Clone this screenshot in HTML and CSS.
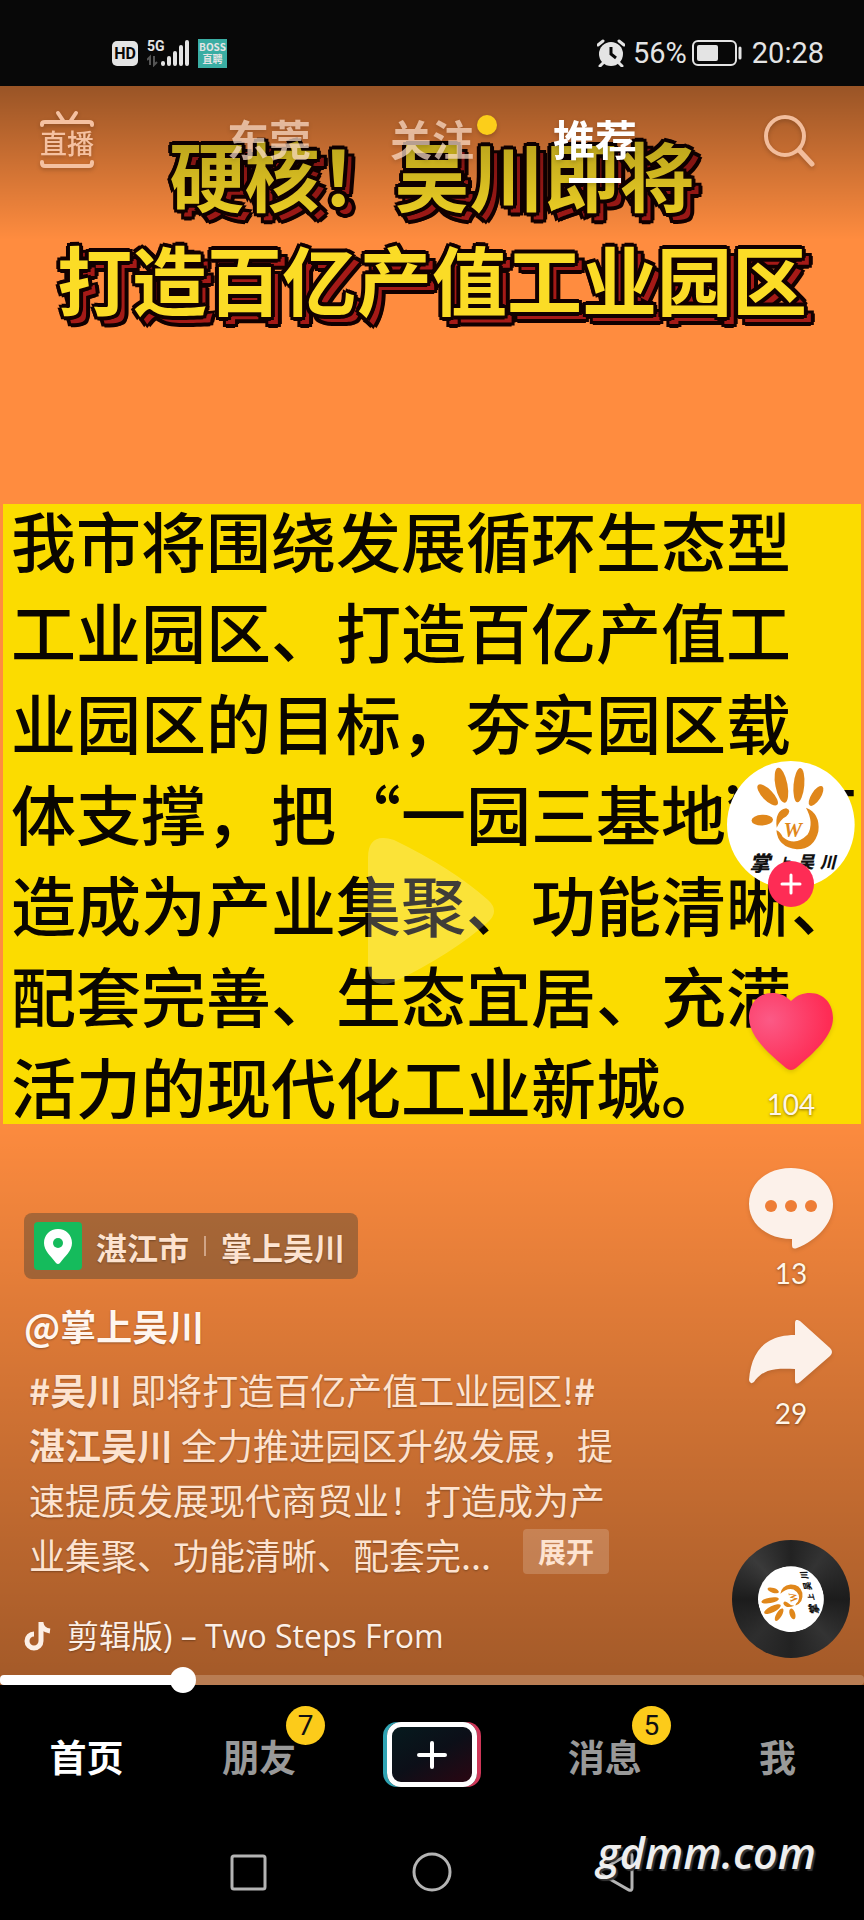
FILE: index.html
```html
<!DOCTYPE html>
<html lang="zh-CN">
<head>
  <meta charset="UTF-8" />
  <meta name="viewport" content="width=device-width, initial-scale=1.0" />
  <title>推荐 - 掌上吴川</title>
  <link rel="stylesheet" href="styles.css">
</head>
<body>
  <!-- shared logo -->
  <svg class="defs" width="0" height="0" aria-hidden="true">
    <symbol id="logo" viewBox="142 66 381 381">
      <circle cx="332" cy="256" r="190" fill="#fff"/>
      <g fill="#e0871b">
        <ellipse cx="247" cy="242" rx="32" ry="16" transform="rotate(-3 247 242)"/>
        <ellipse cx="263" cy="167" rx="41" ry="16" transform="rotate(46 263 167)"/>
        <ellipse cx="304" cy="138" rx="18" ry="53" transform="rotate(-11 304 138)"/>
        <ellipse cx="356" cy="138" rx="16" ry="51" transform="rotate(5 356 138)"/>
        <ellipse cx="407" cy="170" rx="14" ry="34" transform="rotate(33 407 170)"/>
        <path d="M377 205Q420 222 414 275Q402 328 350 329Q293 322 289 272Q300 275 308 292Q345 322 382 285Q402 250 377 205Z"/>
        <path d="M290 265Q283 214 318 207Q337 213 318 231Q300 240 290 265Z"/>
      </g>
      <text x="310" y="292" class="logo-w">W</text>
      <g class="logo-name">
        <text x="208" y="394" font-size="62">掌</text>
        <text x="290" y="386" font-size="40">上</text>
        <text x="352" y="386" font-size="50">吴</text>
        <text x="418" y="384" font-size="48">川</text>
      </g>
    </symbol>
  </svg>

  <!-- STATUS BAR -->
  <div class="status">
    <div class="status-left">
      <span class="hd">HD</span>
      <svg class="signal" width="43" height="28" viewBox="0 0 43 28">
        <text x="0" y="12" class="signal-text">5G</text>
        <path d="M3 26V18L0 21M7 17v9l3-3" stroke="#555" stroke-width="2" fill="none"/>
        <g stroke="#e4e4e4" stroke-width="4" stroke-linecap="round">
          <path d="M16 24v1M22 19v6M28 14v11M34 8v17M40 3v22"/>
        </g>
      </svg>
      <span class="boss"><b>BOSS</b><b>直聘</b></span>
    </div>
    <div class="status-right">
      <svg width="28" height="28" viewBox="0 0 28 28">
        <circle cx="14" cy="15" r="12" fill="#e4e4e4"/>
        <path d="M1 6l5-4M27 6l-5-4M6 24l-3 3M22 24l3 3" stroke="#e4e4e4" stroke-width="3" stroke-linecap="round"/>
        <path d="M14 8v7l5 4" stroke="#080808" stroke-width="3" fill="none"/>
      </svg>
      <span class="percent">56%</span>
      <svg class="battery" width="52" height="28" viewBox="0 0 52 28">
        <rect x="2" y="2" width="43" height="24" rx="5" fill="none" stroke="#e4e4e4" stroke-width="2"/>
        <rect x="6" y="6" width="21" height="16" rx="2" fill="#e4e4e4"/>
        <path d="M49 9v10" stroke="#e4e4e4" stroke-width="3" stroke-linecap="round"/>
      </svg>
      <span>20:28</span>
    </div>
  </div>

  <!-- VIDEO -->
  <main class="stage">
    <section class="video">
      <h1>硬核！吴川即将<br>打造百亿产值工业园区</h1>
      <div class="board">
        <p>我市将围绕发展循环生态型<br>工业园区、打造百亿产值工<br>业园区的目标，夯实园区载<br>体支撑，把“一园三基地”打<br>造成为产业集聚、功能清晰、<br>配套完善、生态宜居、充满<br>活力的现代化工业新城。</p>
        <svg class="play" width="126" height="146" viewBox="0 0 126 146">
          <path d="M0 20Q0 -6 26 2Q84 30 120 62Q132 73 120 84Q84 116 26 144Q0 152 0 126Z" fill="#fff"/>
        </svg>
      </div>
    </section>
    <div class="shade"></div>

    <header class="topbar">
      <a class="live" href="#live">
        <svg width="54" height="60" viewBox="0 0 54 60" fill="none" stroke="#f5c1a1" stroke-width="4" stroke-linecap="round" stroke-linejoin="round">
          <path d="M18 3l6 9M36 3l-6 9M2 15v-1q0-2 3-2h44q3 0 3 2v1M2 52v1q0 3 3 3h44q3 0 3-3v-1"/>
          <text x="0" y="44" class="live-text">直播</text>
        </svg>
      </a>
      <nav class="tabs">
        <a href="#city">东莞</a>
        <a href="#follow" class="dot">关注</a>
        <a href="#recommend" class="active">推荐</a>
      </nav>
      <button class="search" aria-label="搜索">
        <svg width="52" height="54" viewBox="0 0 52 54" fill="none" stroke="#f2bd9c" stroke-width="4" stroke-linecap="round">
          <circle cx="21" cy="22" r="19"/>
          <path d="M35 36l13 14" stroke-width="5"/>
        </svg>
      </button>
    </header>

    <!-- right side actions -->
    <aside class="rail">
      <div class="avatar">
        <svg width="128" height="128"><use href="#logo"/></svg>
        <button class="follow" aria-label="关注">
          <svg width="22" height="22" viewBox="0 0 22 22"><path d="M11 2v18M2 11h18" stroke="#fff" stroke-width="3" stroke-linecap="round"/></svg>
        </button>
      </div>
      <button class="action like">
        <svg width="86" height="78" viewBox="0 0 86 78">
          <defs>
            <radialGradient id="heart" cx=".25" cy=".35" r=".7">
              <stop offset="0" stop-color="#fb5a86"/>
              <stop offset="1" stop-color="#fe2c55"/>
            </radialGradient>
          </defs>
          <path d="M43 8C37 2 31 0 24 0C10 0 1 11 1 25C1 43 20 60 38 75Q43 79 48 75C66 60 85 43 85 25C85 11 76 0 62 0C55 0 49 2 43 8Z" fill="url(#heart)"/>
        </svg>
        <span>104</span>
      </button>
      <button class="action comment">
        <svg width="84" height="82" viewBox="0 0 84 82">
          <path d="M42 0C65 0 84 15 84 36C84 56 68 72 48 80Q43 82 43 77V71C18 71 0 56 0 36C0 15 18 0 42 0Z" fill="#fcf1ea"/>
          <g fill="#ee7d36"><circle cx="22" cy="38" r="6"/><circle cx="42" cy="38" r="6"/><circle cx="62" cy="38" r="6"/></g>
        </svg>
        <span>13</span>
      </button>
      <button class="action share">
        <svg width="84" height="64" viewBox="0 0 84 64">
          <path d="M46 3Q46 -2 51 1L81 28Q85 32 81 36L51 62Q46 66 46 60V49C26 48 14 49 5 62Q1 65 0 60C2 34 14 15 46 15Z" fill="#fcf1ea"/>
        </svg>
        <span>29</span>
      </button>
      <a class="disc" href="#music" aria-label="原声">
        <svg width="66" height="66"><use href="#logo"/></svg>
      </a>
    </aside>

    <!-- author + description -->
    <section class="info">
      <a class="place" href="#place">
        <svg width="48" height="48" viewBox="0 0 48 48">
          <rect width="48" height="48" rx="4" fill="#15bb5c"/>
          <path d="M24 7C16 7 10 13 10 21C10 29 17 34 22 41Q24 43 26 41C31 34 38 29 38 21C38 13 32 7 24 7Z" fill="#fff"/>
          <circle cx="24" cy="21" r="5" fill="#15bb5c"/>
        </svg>
        <span>湛江市</span>
        <i></i>
        <span>掌上吴川</span>
      </a>
      <h2>@掌上吴川</h2>
      <p class="desc"><b>#吴川</b> 即将打造百亿产值工业园区!<b>#<br>湛江吴川</b> 全力推进园区升级发展，提<br>速提质发展现代商贸业！打造成为产<br>业集聚、功能清晰、配套完... <button class="more">展开</button></p>
      <div class="music">
        <svg width="28" height="30" viewBox="0 0 28 30" fill="none" stroke="#fcefe6" stroke-width="5">
          <path d="M17 1v19a7 7 0 1 1-7-7M17 2q1 7 9 8"/>
        </svg>
        <span>剪辑版) – Two Steps From</span>
      </div>
    </section>

    <input class="progress" type="range" min="0" max="1000" value="203" aria-label="播放进度">
  </main>

  <!-- BOTTOM NAV -->
  <nav class="navbar">
    <a href="#home" class="active">首页</a>
    <a href="#friends"><span>朋友<em>7</em></span></a>
    <button class="add" aria-label="发布">
      <svg width="32" height="32" viewBox="0 0 32 32"><path d="M16 4v24M3 16h26" stroke="#fff" stroke-width="4" stroke-linecap="round"/></svg>
    </button>
    <a href="#inbox"><span>消息<em>5</em></span></a>
    <a href="#me">我</a>
  </nav>

  <footer class="system">
    <svg width="40" height="44" viewBox="0 0 40 44"><rect x="4" y="6" width="33" height="33" rx="2"/></svg>
    <svg width="44" height="44" viewBox="0 0 44 44"><circle cx="22" cy="22" r="18"/></svg>
    <svg width="40" height="44" viewBox="0 0 40 44"><path d="M5 20L33 4Q36 3 36 6V38Q36 41 33 40L5 24Q2 22 5 20Z"/></svg>
    <span class="watermark">gdmm.com</span>
  </footer>
</body>
</html>
```
FILE: styles.css
```css
*{box-sizing:border-box}
body{margin:0;min-height:100vh;display:flex;flex-direction:column;background:#000;font-family:"Noto Sans CJK SC",sans-serif;color:#fff}
a{color:inherit;text-decoration:none}
button{border:0;padding:0;background:none;font-family:inherit;color:inherit;cursor:pointer}
svg{display:block}
.defs{position:absolute}

/* logo */
.logo-w{font:italic bold 62px "Liberation Serif",serif;fill:#e0871b}
.logo-name{font-family:"Noto Sans CJK SC",sans-serif;font-weight:900;font-style:italic;fill:#111}

/* status bar */
.status{height:86px;padding:20px 40px 0 112px;display:flex;align-items:center;justify-content:space-between;background:#080808;color:#e4e4e4;font:29px/30px Roboto,sans-serif}
.status-left,.status-right{display:flex;align-items:center}
.hd{width:26px;height:25px;border-radius:5px;background:#e4e4e4;color:#080808;font-size:16px;font-weight:bold;line-height:26px;text-align:center}
.signal{margin:0 8px 0 9px}
.signal-text{font:bold 14px Roboto,sans-serif;fill:#e4e4e4}
.boss{width:29px;height:29px;background:#3aada3;display:flex;flex-direction:column;justify-content:center;text-align:center;font:10px/12px "Noto Sans CJK SC",sans-serif}
.percent{margin-left:8px}
.battery{margin:0 9px 0 4px}

/* video, every layer shares one cell */
.stage{flex:1;display:grid;grid-template-columns:minmax(0,1fr);background:#ff8c3f}
.stage>*{grid-area:1/1}
.video{padding:36px 3px 60px}
.video h1{margin:0;font-size:75px;font-weight:700;line-height:104px;text-align:center;white-space:nowrap;color:#fbdc26;
  text-shadow:4px 0 #100,-4px 0 #100,0 4px #100,0 -4px #100,3px 3px #100,-3px 3px #100,3px -3px #100,-3px -3px #100,
    7px 7px #a51a17,
    11px 7px #100,7px 11px #100,10px 10px #100,4px 10px #100,10px 4px #100}
.board{position:relative;margin-top:174px;padding-left:8px;display:flow-root;background:#fbdc00}
.board p{margin:-10px 0 -7px;font-size:65px;font-weight:500;line-height:91px;white-space:nowrap;color:#0a0600}
.play{position:absolute;left:365px;top:334px;opacity:.22}
.shade{background:linear-gradient(rgba(0,0,0,.4),transparent 154px),linear-gradient(transparent 1020px,rgba(0,0,0,.36) 100%)}

.topbar{align-self:start;padding:22px 40px 0;display:grid;grid-template-columns:1fr auto 1fr;align-items:start;filter:drop-shadow(0 2px 2px rgba(0,0,0,.2))}
.live{margin-top:2px}
.live-text{font-size:27px;font-weight:500;fill:#f5c1a1;stroke:none}
.tabs{display:flex;gap:79px;font-size:42px;font-weight:700;line-height:60px}
.tabs a{position:relative;color:rgba(255,225,205,.7)}
.tabs .active{color:#fff}
.tabs .active::after{content:"";position:absolute;left:16px;right:16px;bottom:-15px;height:5px;background:#fff}
.dot::after{content:"";position:absolute;right:-23px;top:7px;width:20px;height:20px;border-radius:50%;background:#fcce1a}
.search{justify-self:end;margin:6px 8px 0 0}

/* keep the controls above the board */
.rail,.info{z-index:1}
.rail{place-self:end;width:128px;margin:0 9px 27px 0;display:flex;flex-direction:column;align-items:center}
.avatar{position:relative;margin-bottom:104px}
.follow{position:absolute;left:41px;bottom:-18px;width:46px;height:46px;border-radius:50%;background:#fe2c55;display:grid;place-items:center}
.action{display:flex;flex-direction:column;align-items:center;font:28px/36px Lato,sans-serif;color:#fff6e8;text-shadow:0 1px 3px rgba(60,30,0,.6)}
.action svg{filter:drop-shadow(0 2px 2px rgba(0,0,0,.12))}
.like{gap:15px;margin-bottom:46px}
.comment{gap:5px;margin-bottom:29px}
.share{gap:11px;margin-bottom:109px}
.disc{width:118px;height:118px;border-radius:50%;display:grid;place-items:center;background:conic-gradient(#222,#333 10%,#1c1c1c 25%,#333 38%,#222 50%,#2e2e2e 62%,#1c1c1c 75%,#3a3a3a 88%,#222)}
.disc svg{transform:rotate(-105deg)}

.info{place-self:end start;margin:0 0 25px 24px;text-shadow:0 1px 2px rgba(0,0,0,.3)}
.place{width:max-content;height:66px;padding:0 13px 0 10px;display:flex;align-items:center;border-radius:8px;background:rgba(60,60,50,.4);font-size:31px;font-weight:700;color:#fde3d0}
.place svg{margin-right:14px}
.place i{width:2px;height:20px;margin:0 15px;background:#d0a486}
.info h2{margin:22px 0 13px;font-size:36px;font-weight:700;line-height:48px;color:#fff6ef}
.desc{margin:0 0 30px 5px;font-size:36px;font-weight:400;line-height:55px;white-space:nowrap;color:#fde3d0}
.more{margin-left:24px;width:86px;height:45px;border-radius:4px;background:rgba(255,255,255,.18);font-size:28px;font-weight:700;line-height:45px;vertical-align:7px}
.music{display:flex;align-items:center;gap:15px;font:32px/48px "Open Sans","Noto Sans CJK SC",sans-serif;color:#fcefe6}

.progress{align-self:end;z-index:1;-webkit-appearance:none;appearance:none;width:100%;height:10px;margin:0;border-radius:4px;background:linear-gradient(90deg,#fff 21%,#b97d53 21%)}
.progress::-webkit-slider-thumb{-webkit-appearance:none;width:26px;height:26px;border-radius:50%;background:#fff}

/* bottom */
.navbar{height:145px;display:grid;grid-template-columns:repeat(5,1fr);justify-items:center;font-size:37px;font-weight:700;line-height:142px;color:#999}
.navbar .active{color:#fff}
.navbar span{position:relative}
.navbar em{position:absolute;right:-29px;top:-23px;width:39px;height:39px;border-radius:50%;background:#fccb1a;color:#111;font:28px/39px Roboto,sans-serif;text-align:center}
.add{width:90px;height:65px;margin-top:37px;border:5px solid #fff;border-radius:14px;background:linear-gradient(150deg,#061a1e,#0c0f18 50%,#2a0612);box-shadow:-4px 0 #2fa3b3,4px 0 #cf3759;display:grid;place-items:center}
.system{position:relative;height:90px;padding-bottom:6px;display:flex;align-items:center;justify-content:center;gap:142px}
.system svg{fill:none;stroke:#b4b4b4;stroke-width:3}
.watermark{position:absolute;right:48px;top:-7px;font:italic 600 43px/60px "Open Sans",sans-serif;color:#eee;text-shadow:2px 2px 1px #333}
```
